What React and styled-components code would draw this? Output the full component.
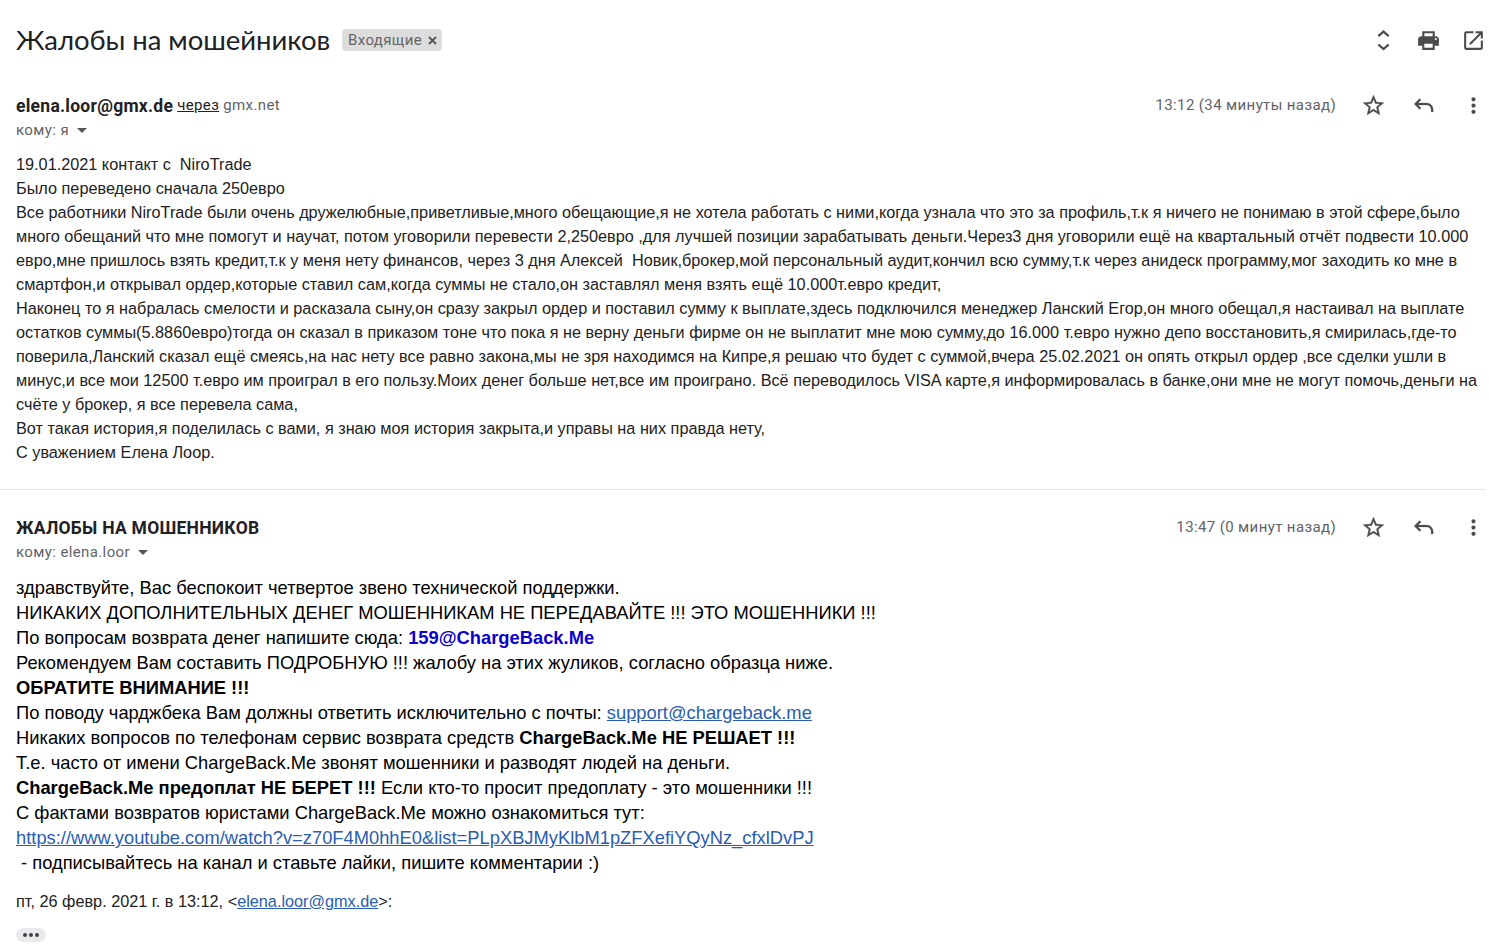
import styled, { createGlobalStyle } from "styled-components";

const GlobalStyle = createGlobalStyle`
    body {
        margin: 0;
        background-color: #fff;
        font-family: Roboto, "Liberation Sans", sans-serif;
    }
`;

const Page = styled.div`
    width: 1489px;
    height: 952px;
    overflow: hidden;
    background-color: #fff;
`;

const Header = styled.header`
    height: 80px;
    padding: 0 3px 0 16px;
    box-sizing: border-box;
    display: flex;
    align-items: center;
`;

const Title = styled.h1`
    margin: 0;
    width: 326px;
    font-family: Lato, sans-serif;
    font-size: 27.5px;
    font-weight: 400;
    line-height: 32px;
    letter-spacing: -0.05px;
    color: #202124;
    white-space: nowrap;
`;

const Label = styled.span`
    display: flex;
    align-items: center;
    gap: 6px;
    height: 22px;
    padding: 0 5px 0 6px;
    border-radius: 4px;
    background-color: #ddd;
    color: #666;
    font-size: 15px;
    letter-spacing: 0.38px;
`;

const HeaderActions = styled.div`
    margin-left: auto;
    display: flex;
    gap: 20px;
`;

const Icon = styled.svg`
    display: block;
    width: 25px;
    height: 25px;
    fill: #4c4c4c;
    stroke: #4c4c4c;
    stroke-width: ${props => props.$weight || 0};
`;

const Message = styled.section`
    padding: ${props => props.$top}px 3px 0 16px;
`;

const MessageHead = styled.div`
    display: flex;
    height: 48px;
`;

const SenderBlock = styled.div`
    flex: 1;
    white-space: nowrap;
`;

const Sender = styled.div`
    display: flex;
    align-items: center;
    gap: 4px;
    height: 25px;
    color: #5f6368;
    font-size: 15px;
    letter-spacing: 0.38px;
`;

const Name = styled.span`
    padding-top: 1px;
    font-size: 17.5px;
    font-weight: 700;
    letter-spacing: 0.26px;
    color: #202124;
`;

const Origin = styled.span`
    padding-bottom: 2px;
`;

const Via = styled.span`
    color: #222;
    text-decoration: underline;
`;

const Recipient = styled.div`
    display: flex;
    align-items: center;
    gap: 8px;
    height: 24px;
    font-size: 15px;
    letter-spacing: 0.38px;
    color: #5f6368;
`;

const Arrow = styled.span`
    border: 5px solid transparent;
    border-top-color: #555;
    border-bottom: 0;
`;

const MessageActions = styled.div`
    display: flex;
    align-items: center;
    gap: 25px;
    height: 25px;
    white-space: nowrap;
`;

const Time = styled.span`
    padding-bottom: 2px;
    font-size: 15px;
    letter-spacing: 0.38px;
    color: #5f6368;
`;

const Body = styled.div`
    padding-top: ${props => props.$top}px;
    font-family: "Liberation Sans", Arial, sans-serif;
    font-size: ${props => props.$size}px;
    line-height: ${props => props.$line}px;
    color: ${props => props.$color};
`;

const Line = styled.div`
    white-space: pre;
`;

const Divider = styled.hr`
    width: 1486px;
    height: 1px;
    margin: 25px 0 0;
    border: 0;
    background-color: #e8e8e8;
`;

const Link = styled.a`
    color: #2a5db0;
    text-decoration: underline;
`;

const Address = styled.b`
    color: #0b00cc;
`;

const More = styled.div`
    display: flex;
    align-items: center;
    justify-content: center;
    gap: 2px;
    width: 30px;
    height: 14px;
    margin-top: 15px;
    border-radius: 7px;
    background-color: #e8eaed;
`;

const Dot = styled.span`
    width: 4px;
    height: 4px;
    border-radius: 50%;
    background-color: #444;
`;

const icons = {
    expand: "M12 4.9 16.2 8.6 17.7 7 12 2 6.3 7 7.8 8.6zM12 18.7 7.8 15 6.3 16.6 12 21.6 17.7 16.6 16.2 15z",
    print: "M19 8h-1V3H6v5H5c-1.66 0-3 1.34-3 3v6h4v4h12v-4h4v-6c0-1.66-1.34-3-3-3zM8 5h8v3H8V5zm8 14H8v-4h8v4zm3-7.5a1 1 0 1 1 0-2 1 1 0 0 1 0 2z",
    open: "M19 19H5V5h7V3H5a2 2 0 0 0-2 2v14a2 2 0 0 0 2 2h14c1.1 0 2-.9 2-2v-7h-2v7zM14 3v2h3.59l-9.83 9.83 1.41 1.41L19 6.41V10h2V3h-7z",
    star: "M22 9.24l-7.19-.62L12 2 9.19 8.63 2 9.24l5.46 4.73L5.82 21 12 17.27 18.18 21l-1.63-7.03L22 9.24zM12 15.4l-3.76 2.27 1-4.28-3.32-2.88 4.38-.38L12 6.1l1.71 4.04 4.38.38-3.32 2.88 1 4.28L12 15.4z",
    reply: "M8.3 5.2 9.7 6.6 6.8 9.5H15c3.5 0 6.3 2.8 6.3 6.3v2.4h-2v-2.4c0-2.4-1.9-4.3-4.3-4.3H6.8l2.9 2.9-1.4 1.4L3 10.5z",
    more: "M12 8c1.1 0 2-.9 2-2s-.9-2-2-2-2 .9-2 2 .9 2 2 2zm0 2c-1.1 0-2 .9-2 2s.9 2 2 2 2-.9 2-2-.9-2-2-2zm0 6c-1.1 0-2 .9-2 2s.9 2 2 2 2-.9 2-2-.9-2-2-2z",
};

const complaint = [
    "19.01.2021 контакт с  NiroTrade",
    "Было переведено сначала 250евро",
    "Все работники NiroTrade были очень дружелюбные,приветливые,много обещающие,я не хотела работать с ними,когда узнала что это за профиль,т.к я ничего не понимаю в этой сфере,было",
    "много обещаний что мне помогут и научат, потом уговорили перевести 2,250евро ,для лучшей позиции зарабатывать деньги.Через3 дня уговорили ещё на квартальный отчёт подвести 10.000",
    "евро,мне пришлось взять кредит,т.к у меня нету финансов, через 3 дня Алексей  Новик,брокер,мой персональный аудит,кончил всю сумму,т.к через анидеск программу,мог заходить ко мне в",
    "смартфон,и открывал ордер,которые ставил сам,когда суммы не стало,он заставлял меня взять ещё 10.000т.евро кредит,",
    "Наконец то я набралась смелости и расказала сыну,он сразу закрыл ордер и поставил сумму к выплате,здесь подключился менеджер Ланский Егор,он много обещал,я настаивал на выплате",
    "остатков суммы(5.8860евро)тогда он сказал в приказом тоне что пока я не верну деньги фирме он не выплатит мне мою сумму,до 16.000 т.евро нужно депо восстановить,я смирилась,где-то",
    "поверила,Ланский сказал ещё смеясь,на нас нету все равно закона,мы не зря находимся на Кипре,я решаю что будет с суммой,вчера 25.02.2021 он опять открыл ордер ,все сделки ушли в",
    "минус,и все мои 12500 т.евро им проиграл в его пользу.Моих денег больше нет,все им проиграно. Всё переводилось VISA карте,я информировалась в банке,они мне не могут помочь,деньги на",
    "счёте у брокер, я все перевела сама,",
    "Вот такая история,я поделилась с вами, я знаю моя история закрыта,и управы на них правда нету,",
    "С уважением Елена Лоор.",
];

function Glyph({ name, weight }) {
    return (
        <Icon viewBox="0 0 24 24" $weight={weight}>
            <path d={icons[name]} />
        </Icon>
    );
}

function MessageTop({ name, via, to, time }) {
    return (
        <MessageHead>
            <SenderBlock>
                <Sender>
                    <Name>{name}</Name>
                    {via && <Origin><Via>через</Via> {via}</Origin>}
                </Sender>
                <Recipient>кому: {to}<Arrow /></Recipient>
            </SenderBlock>
            <MessageActions>
                <Time>{time}</Time>
                <Glyph name="star" weight={0.3} />
                <Glyph name="reply" weight={0.2} />
                <Glyph name="more" />
            </MessageActions>
        </MessageHead>
    );
}

export default function App() {
    return (
        <Page>
            <GlobalStyle />
            <Header>
                <Title>Жалобы на мошейников</Title>
                <Label>
                    Входящие
                    <svg width="9" height="9" viewBox="0 0 9 9" stroke="#555" strokeWidth="1.8">
                        <path d="M1 1l7 7M8 1l-7 7" />
                    </svg>
                </Label>
                <HeaderActions>
                    <Glyph name="expand" />
                    <Glyph name="print" />
                    <Glyph name="open" />
                </HeaderActions>
            </Header>

            <Message $top={13}>
                <MessageTop
                    name="elena.loor@gmx.de"
                    via="gmx.net"
                    to="я"
                    time="13:12 (34 минуты назад)"
                />
                <Body $top={11} $size={16.25} $line={24} $color="#222">
                    {complaint.map((text, i) => <Line key={i}>{text}</Line>)}
                </Body>
            </Message>

            <Divider />

            <Message $top={25}>
                <MessageTop
                    name="ЖАЛОБЫ НА МОШЕННИКОВ"
                    to="elena.loor"
                    time="13:47 (0 минут назад)"
                />
                <Body $top={12} $size={18.33} $line={25} $color="#000">
                    <Line>здравствуйте, Вас беспокоит четвертое звено технической поддержки.</Line>
                    <Line>НИКАКИХ ДОПОЛНИТЕЛЬНЫХ ДЕНЕГ МОШЕННИКАМ НЕ ПЕРЕДАВАЙТЕ !!! ЭТО МОШЕННИКИ !!!</Line>
                    <Line>По вопросам возврата денег напишите сюда: <Address>159@ChargeBack.Me</Address></Line>
                    <Line>Рекомендуем Вам составить ПОДРОБНУЮ !!! жалобу на этих жуликов, согласно образца ниже.</Line>
                    <Line><b>ОБРАТИТЕ ВНИМАНИЕ !!!</b></Line>
                    <Line>По поводу чарджбека Вам должны ответить исключительно с почты: <Link>support@chargeback.me</Link></Line>
                    <Line>Никаких вопросов по телефонам сервис возврата средств <b>ChargeBack.Me НЕ РЕШАЕТ !!!</b></Line>
                    <Line>Т.е. часто от имени ChargeBack.Me звонят мошенники и разводят людей на деньги.</Line>
                    <Line><b>ChargeBack.Me предоплат НЕ БЕРЕТ !!!</b> Если кто-то просит предоплату - это мошенники !!!</Line>
                    <Line>С фактами возвратов юристами ChargeBack.Me можно ознакомиться тут:</Line>
                    <Line><Link>https://www.youtube.com/watch?v=z70F4M0hhE0&amp;list=PLpXBJMyKlbM1pZFXefiYQyNz_cfxlDvPJ</Link></Line>
                    <Line>{" - подписывайтесь на канал и ставьте лайки, пишите комментарии :)"}</Line>
                </Body>
                <Body $top={14} $size={16.25} $line={24} $color="#222">
                    <Line>пт, 26 февр. 2021 г. в 13:12, &lt;<Link>elena.loor@gmx.de</Link>&gt;:</Line>
                </Body>
                <More><Dot /><Dot /><Dot /></More>
            </Message>
        </Page>
    );
}
